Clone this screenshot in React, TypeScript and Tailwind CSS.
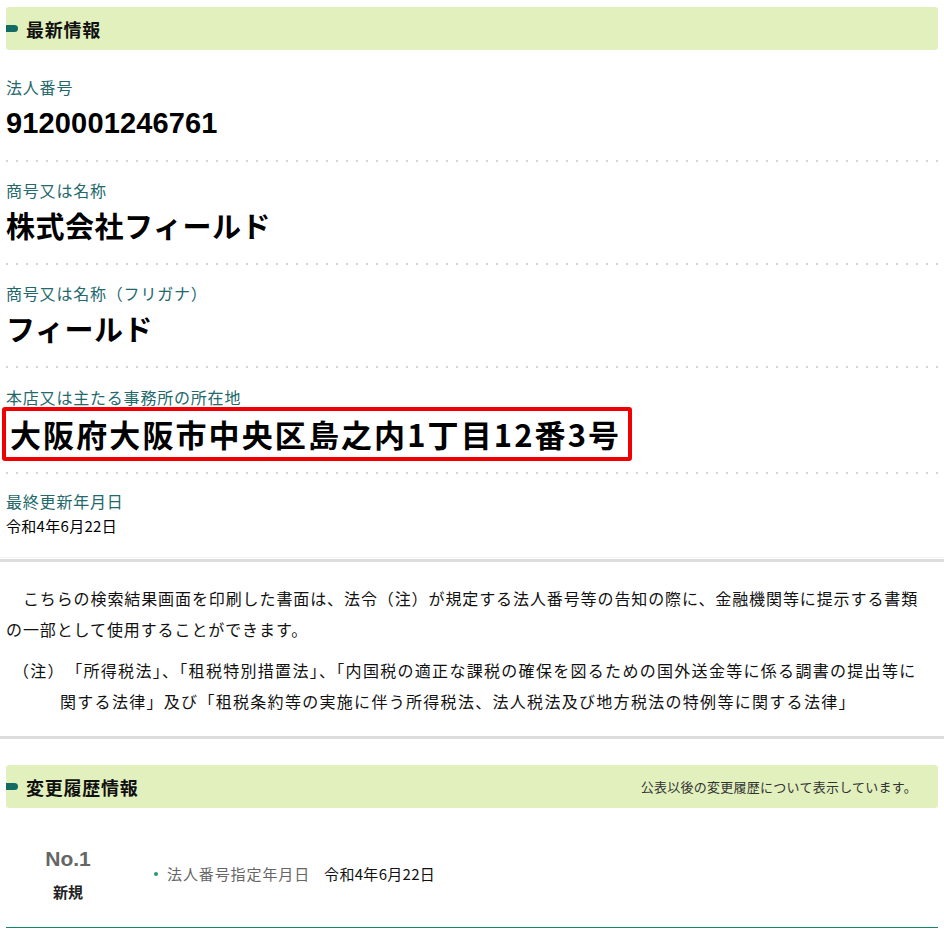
import React from "react";

function SectionHeader({ title, note }: { title: string; note?: string }) {
  return (
    <div className="flex h-[43px] items-center rounded-[3px] bg-[#e1f0bd]">
      <span className="h-[7px] w-[12px] rounded-r-full bg-[#136b63]" />
      <span className="ml-[8px] text-[18px] font-bold leading-none tracking-[0.75px] text-[#111]">{title}</span>
      {note && (
        <span className="ml-auto mr-[21px] text-[13px] leading-none tracking-[0.25px] text-[#333]">{note}</span>
      )}
    </div>
  );
}

function Dotted() {
  return (
    <div className="h-[2px] bg-[linear-gradient(to_right,#d4d4d4_2px,transparent_2px)] bg-[length:10px_2px] bg-repeat-x" />
  );
}

function Label({ children }: { children: React.ReactNode }) {
  return <div className="h-[20px] text-[16px] leading-[20px] tracking-[0.8px] text-[#23686b]">{children}</div>;
}

export default function App() {
  return (
    <div className="min-h-[936px] w-[944px] bg-white px-[6px] pt-[7px] font-['Noto_Sans_CJK_JP',sans-serif] text-black">
      <SectionHeader title="最新情報" />

      <div className="pt-[27px] pb-[17px]">
        <Label>法人番号</Label>
        <div className="mt-[6px] h-[40px] font-['Liberation_Sans',sans-serif] text-[29px] font-bold leading-[40px] tracking-[0.15px]">
          9120001246761
        </div>
      </div>
      <Dotted />

      <div className="pt-[18px] pb-[18px]">
        <Label>商号又は名称</Label>
        <div className="mt-[5px] h-[40px] text-[29px] font-bold leading-[40px] tracking-[0.5px]">株式会社フィールド</div>
      </div>
      <Dotted />

      <div className="pt-[18px] pb-[18px]">
        <Label>商号又は名称（フリガナ）</Label>
        <div className="mt-[5px] h-[40px] text-[29px] font-bold leading-[40px] tracking-[0.5px]">フィールド</div>
      </div>
      <Dotted />

      <div className="pt-[19px] pb-[11px]">
        <Label>本店又は主たる事務所の所在地</Label>
        <div className="-ml-[4px] w-[630px] rounded-[3px] border-[4px] border-[#f00000] pl-[4px]">
          <div className="h-[46px] text-[31px] font-bold leading-[46px] tracking-[2.1px]">大阪府大阪市中央区島之内1丁目12番3号</div>
        </div>
      </div>
      <Dotted />

      <div className="pt-[17px] pb-[21px]">
        <Label>最終更新年月日</Label>
        <div className="mt-[5px] h-[20px] text-[15px] leading-[20px] tracking-[0.3px]">令和4年6月22日</div>
      </div>

      <div className="-mx-[6px] h-[1px] bg-[#f3f3f3]" />
      <div className="-mx-[6px] mt-[1px] h-[3px] bg-[#dcdcdc]" />

      <div className="pt-[21px] text-[16px] leading-[31px] text-[#111]">
        <p className="pr-[16px] tracking-[0.9px]">　こちらの検索結果画面を印刷した書面は、法令（注）が規定する法人番号等の告知の際に、金融機関等に提示する書類の一部として使用することができます。</p>
        <p className="mt-[10px] pl-[54px] pr-[12px] -indent-[47px] tracking-[1.3px]">
          （注）　「所得税法」、「租税特別措置法」、「内国税の適正な課税の確保を図るための国外送金等に係る調書の提出等に関する法律」及び「租税条約等の実施に伴う所得税法、法人税法及び地方税法の特例等に関する法律」
        </p>
      </div>

      <div className="-mx-[6px] mt-[19px] h-[3px] bg-[#dcdcdc]" />

      <div className="pt-[26px]">
        <SectionHeader title="変更履歴情報" note="公表以後の変更履歴について表示しています。" />
      </div>

      <div className="flex items-center pt-[38px] pb-[25px]">
        <div className="flex w-[124px] flex-col items-center">
          <div className="h-[26px] font-['Liberation_Sans',sans-serif] text-[21px] font-bold leading-[26px] text-[#666]">No.1</div>
          <div className="mt-[10px] h-[20px] text-[15px] font-bold leading-[20px] text-[#222]">新規</div>
        </div>
        <span className="ml-[24px] h-[4px] w-[4px] rounded-full bg-[#2a9a6a]" />
        <span className="ml-[9px] text-[15px] leading-[20px] tracking-[0.9px] text-[#666]">法人番号指定年月日</span>
        <span className="ml-[14px] text-[15px] leading-[20px] tracking-[0.3px] text-[#111]">令和4年6月22日</span>
      </div>
      <div className="h-[1px] bg-[#0f8a62]" />
    </div>
  );
}
